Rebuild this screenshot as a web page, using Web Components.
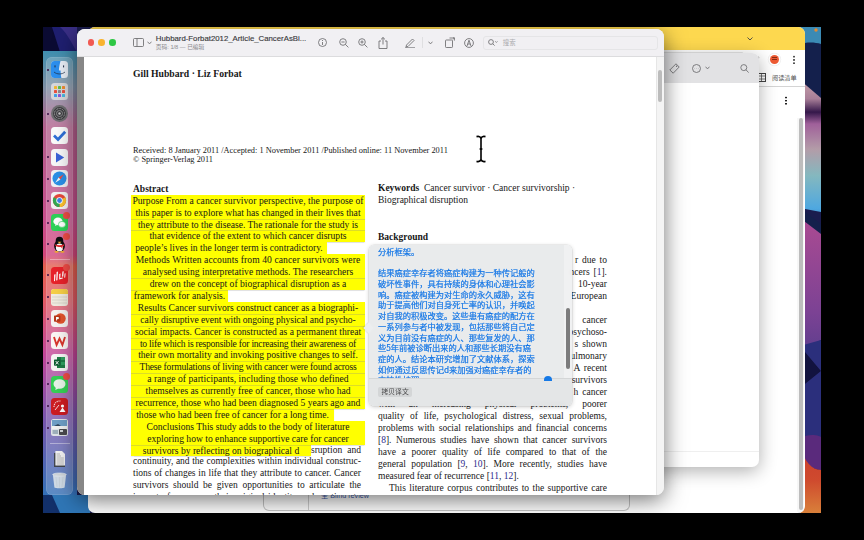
<!DOCTYPE html>
<html><head><meta charset="utf-8">
<style>
html,body{margin:0;padding:0;background:#000;width:864px;height:540px;overflow:hidden}
body{padding:27px 43px;box-sizing:border-box;font-family:"Liberation Serif",serif}
.ln{color:#2b2b8c}
b{font-weight:700}
svg{display:block}
</style></head><body>
<x-desktop>
  <x-dock slot="dock">
    <x-dock-item dot><svg viewBox="0 0 17 17"><rect width="17" height="17" rx="3.5" fill="#e8eef6"/><path d="M3.5 0H9.5C8.6 3.5 8 6.5 7.9 9.4H9.6C9.6 11.5 9.8 14 10.4 17H3.5A3.5 3.5 0 0 1 0 13.5V3.5A3.5 3.5 0 0 1 3.5 0Z" fill="#2c8fee"/><path d="M4 4.4V6.4M12.6 4.4V6.4" stroke="#1b2a44" stroke-width="1"/><path d="M3 11C6 13.6 11 13.6 14 11" stroke="#1b2a44" stroke-width=".7" fill="none"/></svg></x-dock-item>
    <x-dock-item><svg viewBox="0 0 17 17"><rect width="17" height="17" rx="3.5" fill="#d8d8dc"/><g><rect x="3" y="3" width="3" height="3" rx=".6" fill="#f2b632"/><rect x="7" y="3" width="3" height="3" rx=".6" fill="#5fbf4f"/><rect x="11" y="3" width="3" height="3" rx=".6" fill="#ef8a2f"/><rect x="3" y="7" width="3" height="3" rx=".6" fill="#e8503f"/><rect x="7" y="7" width="3" height="3" rx=".6" fill="#8a8a90"/><rect x="11" y="7" width="3" height="3" rx=".6" fill="#e8503f"/><rect x="3" y="11" width="3" height="3" rx=".6" fill="#3fa0e8"/><rect x="7" y="11" width="3" height="3" rx=".6" fill="#8d56d8"/><rect x="11" y="11" width="3" height="3" rx=".6" fill="#48b6e0"/></g></svg></x-dock-item>
    <x-dock-item dot><svg viewBox="0 0 17 17"><rect width="17" height="17" rx="8.5" fill="#6f6f72"/><circle cx="8.5" cy="8.5" r="6.4" fill="#3d3d40"/><circle cx="8.5" cy="8.5" r="5" fill="none" stroke="#a9a9ac" stroke-width="1" stroke-dasharray="1 .7"/><circle cx="8.5" cy="8.5" r="3" fill="none" stroke="#8a8a8d" stroke-width="1"/><circle cx="8.5" cy="8.5" r="1.2" fill="#c4c4c6"/></svg></x-dock-item>
    <x-dock-item><svg viewBox="0 0 17 17"><rect width="17" height="17" rx="3.5" fill="#fbfbfb"/><path d="M3 8.6L7 12.4L14.2 4.8" fill="none" stroke="#2e6fd6" stroke-width="2.8"/></svg></x-dock-item>
    <x-dock-item dot><svg viewBox="0 0 17 17"><rect width="17" height="17" rx="3.5" fill="#f7f7f8"/><path d="M5 3.6L13.2 8.6L5 13.6Z" fill="#3a63d8"/></svg></x-dock-item>
    <x-dock-item dot><svg viewBox="0 0 17 17"><rect width="17" height="17" rx="3.5" fill="#f1f1f3"/><circle cx="8.5" cy="8.5" r="7" fill="#2a8fe6"/><path d="M12.8 4.2L7.6 7.6L9.4 9.4Z" fill="#ef4a3c"/><path d="M4.2 12.8L7.6 7.6L9.4 9.4Z" fill="#f4f4f6"/></svg></x-dock-item>
    <x-dock-item dot><svg viewBox="0 0 17 17"><rect width="17" height="17" rx="3.5" fill="#f3f3f3"/><circle cx="8.5" cy="8.5" r="6.6" fill="#e7483a"/><path d="M8.5 8.5L14.2 5.2A6.6 6.6 0 0 1 8.5 15.1Z" fill="#f9c22e"/><path d="M8.5 8.5L8.5 15.1A6.6 6.6 0 0 1 2.8 5.2Z" fill="#32a852"/><circle cx="8.5" cy="8.5" r="3.2" fill="#fff"/><circle cx="8.5" cy="8.5" r="2.4" fill="#3f82ec"/></svg></x-dock-item>
    <x-dock-item dot badge><svg viewBox="0 0 17 17"><rect width="17" height="17" rx="3.5" fill="#2ed158"/><ellipse cx="7" cy="7.4" rx="4.6" ry="3.8" fill="#fff"/><path d="M4.6 10L4 12L6.4 10.8Z" fill="#fff"/><ellipse cx="11" cy="10.4" rx="3.6" ry="3" fill="#fff" stroke="#2ed158" stroke-width=".6"/></svg></x-dock-item>
    <x-dock-item dot badge><svg viewBox="0 0 17 17"><ellipse cx="8.5" cy="10" rx="5.4" ry="6" fill="#0e0e10"/><ellipse cx="8.5" cy="5" rx="3.8" ry="4.2" fill="#0e0e10"/><ellipse cx="8.5" cy="11.6" rx="3.6" ry="4" fill="#fff"/><path d="M6.6 5.8H10.4L8.5 7.4Z" fill="#f4b02e"/><path d="M4 8.2C6.5 9.6 10.5 9.6 13 8.2L13 10C12 10.6 11.6 10.6 11.4 10.6L11.6 13L10 11C8.5 11.2 6.5 11 4.4 10Z" fill="#e3262a"/><ellipse cx="5.6" cy="15.8" rx="2.2" ry=".9" fill="#f4b02e"/><ellipse cx="11.4" cy="15.8" rx="2.2" ry=".9" fill="#f4b02e"/></svg></x-dock-item>
    <x-dock-sep></x-dock-sep>
    <x-dock-item dot badge><svg viewBox="0 0 17 17"><rect width="17" height="17" rx="3.5" fill="#e8222a"/><g fill="#fff"><path d="M3.2 7.6L4.6 7.2L4 14L3 14.2Z"/><path d="M5.6 5L7 4.6L6.4 13.2L5.2 13.6Z"/><path d="M8.2 7L9.6 6.6L9.2 11L12 10.4L11.8 11.6L8.2 12.4Z"/><path d="M11.4 4.6L12.8 4.2L12.2 9.4L11 9.7Z"/><path d="M13.6 6.4L14.6 6.2L14.2 10.6L13.2 10.8Z"/></g></svg></x-dock-item>
    <x-dock-item dot><svg viewBox="0 0 17 17"><rect width="17" height="17" rx="3" fill="#f0ece0"/><path d="M0 5V3A3 3 0 0 1 3 0H14A3 3 0 0 1 17 3V5Z" fill="#f6cf45"/><path d="M1 8H16M1 11H16M1 14H16" stroke="#cfcabc" stroke-width=".6"/></svg></x-dock-item>
    <x-dock-item dot><svg viewBox="0 0 17 17"><rect width="17" height="17" rx="3.5" fill="#f6f3f1"/><circle cx="9.5" cy="8.5" r="5.2" fill="#e2542c"/><rect x="3" y="5.4" width="6.4" height="6.4" rx=".7" fill="#b7391a"/><path d="M5 7H6.9A1.1 1.1 0 0 1 6.9 9.2H5.9V10.4H5Z" fill="#fff"/></svg></x-dock-item>
    <x-dock-item dot><svg viewBox="0 0 17 17"><rect width="17" height="17" rx="3.5" fill="#fbf7f5"/><path d="M3 5L5.6 13L8.5 6.6L11.4 13L14 5" fill="none" stroke="#d8362c" stroke-width="1.9"/></svg></x-dock-item>
    <x-dock-item dot><svg viewBox="0 0 17 17"><rect width="17" height="17" rx="3.5" fill="#f6f6f4"/><path d="M6 3H14V14H6Z" fill="#1e7b46"/><path d="M10 3H14V6H10ZM10 8H14V11H10Z" fill="#2f9d5f"/><rect x="3" y="5.4" width="6.4" height="6.4" rx=".7" fill="#0f5e33"/><path d="M4.6 7L7.6 10.4M7.6 7L4.6 10.4" stroke="#fff" stroke-width=".9"/></svg></x-dock-item>
    <x-dock-item dot badge><svg viewBox="0 0 17 17"><rect width="17" height="17" rx="3.5" fill="#36cf55"/><ellipse cx="8.5" cy="8" rx="6" ry="4.8" fill="#e8f4e8"/><path d="M5 11.4L4.2 14L7.6 12.4Z" fill="#e8f4e8"/></svg></x-dock-item>
    <x-dock-item dot><svg viewBox="0 0 17 17"><rect width="17" height="17" rx="3.5" fill="#cc1c22"/><path d="M3 9C3 5 6 2.6 10 3" fill="none" stroke="#f7d7d7" stroke-width="1.1" stroke-dasharray="1.2 .8"/><circle cx="11.5" cy="8" r="1.6" fill="#fff"/><path d="M8.5 14L11.5 9.5L14.5 14Z" fill="#fff"/><path d="M4 12L8 7" stroke="#fff" stroke-width=".8"/></svg></x-dock-item>
    <x-dock-item dot><svg viewBox="0 0 17 17"><rect width="17" height="17" rx="2.5" fill="#e0e4e8"/><rect x="1" y="1" width="15" height="9" fill="#6f9fc6"/><path d="M1 7H16V10H1Z" fill="#f2f2f2"/><path d="M3 7L7 5L10 7Z" fill="#31465c"/><rect x="8" y="10" width="8" height="6" rx="1" fill="#4a4a4e"/><rect x="9" y="11" width="3" height="2" fill="#cfd4d8"/><rect x="1.5" y="11" width="5.5" height="4" fill="#9fb0bc"/></svg></x-dock-item>
    <x-dock-sep></x-dock-sep>
    <x-dock-item><svg viewBox="0 0 17 17"><path d="M3 3H12L14 5V17H3Z" fill="#41464e"/><path d="M4.4 1H11L14 4V15.6H4.4Z" fill="#f2f2f2"/><path d="M5.6 6H10M5.6 8H12.8M5.6 10H12.8M5.6 12H12.8M5.6 14H12.8M5.6 4H9" stroke="#8f8f8f" stroke-width=".6"/></svg></x-dock-item>
    <x-dock-item><svg viewBox="0 0 17 17"><ellipse cx="8.5" cy="2.6" rx="6.8" ry="1.6" fill="#cfd5da" stroke="#eef1f3" stroke-width=".6"/><path d="M1.9 3L3.4 15.6C3.6 16.6 13.4 16.6 13.6 15.6L15.1 3C12 4.4 5 4.4 1.9 3Z" fill="#dfe6ea" fill-opacity=".88"/><path d="M5 5L6 15M8.5 5V15.4M12 5L11 15" stroke="#b8c2c8" stroke-width=".35"/></svg></x-dock-item>
  </x-dock>

  <x-browser-window></x-browser-window>
  <x-notes-window></x-notes-window>
  <x-under-window></x-under-window>

  <x-pdf-window>
    <x-pdf-toolbar slot="bar"></x-pdf-toolbar>
    <x-pdf-page>
      <x-author>Gill Hubbard · Liz Forbat</x-author>
      <x-dates>
        <div>Received: 8 January 2011 /Accepted: 1 November 2011 /Published online: 11 November 2011</div>
        <div>© Springer-Verlag 2011</div>
      </x-dates>
      <x-columns>
        <div slot="left">
          <x-head after="0">Abstract</x-head>
          <x-hl ls=".05">Purpose From a cancer survivor perspective, the purpose of</x-hl>
          <x-hl>this paper is to explore what has changed in their lives that</x-hl>
          <x-hl seam>they attribute to the disease. The rationale for the study is</x-hl>
          <x-hl seam>that evidence of the extent to which cancer disrupts</x-hl>
          <x-hl w="196">people’s lives in the longer term is contradictory.</x-hl>
          <x-hl ls=".08">Methods Written accounts from 40 cancer survivors were</x-hl>
          <x-hl>analysed using interpretative methods. The researchers</x-hl>
          <x-hl seam>drew on the concept of biographical disruption as a</x-hl>
          <x-hl w="97" seam>framework for analysis.</x-hl>
          <x-hl>Results Cancer survivors construct cancer as a biographi-</x-hl>
          <x-hl seam ls="-.07">cally disruptive event with ongoing physical and psycho-</x-hl>
          <x-hl seam>social impacts. Cancer is constructed as a permanent threat</x-hl>
          <x-hl seam ls="-.24">to life which is responsible for increasing their awareness of</x-hl>
          <x-hl seam ls="-.03">their own mortality and invoking positive changes to self.</x-hl>
          <x-hl seam ls="-.2">These formulations of living with cancer were found across</x-hl>
          <x-hl seam ls=".04">a range of participants, including those who defined</x-hl>
          <x-hl seam>themselves as currently free of cancer, those who had</x-hl>
          <x-hl seam>recurrence, those who had been diagnosed 5 years ago and</x-hl>
          <x-hl w="203" seam>those who had been free of cancer for a long time.</x-hl>
          <x-hl>Conclusions This study adds to the body of literature</x-hl>
          <x-hl>exploring how to enhance supportive care for cancer</x-hl>
          <x-split>
            <x-hl slot="mark" w="180" seam>survivors by reflecting on biographical d</x-hl>
            <span slot="rest">sruption and</span>
          </x-split>
          <x-jline>continuity, and the complexities within individual construc-</x-jline>
          <x-jline>tions of changes in life that they attribute to cancer. Cancer</x-jline>
          <x-jline>survivors should be given opportunities to articulate the</x-jline>
          <x-jline>impact of cancer on their original identity and continue to</x-jline>
        </div>
        <div slot="right" style="--p:11.97px">
          <x-para>
            <x-jline last><b>Keywords</b>&nbsp; Cancer survivor · Cancer survivorship ·</x-jline>
            <x-jline last>Biographical disruption</x-jline>
          </x-para>
          <x-head gap="24.5" after="12">Background</x-head>
          <x-para after="12">
            <x-jline frag>r due to</x-jline>
            <x-jline frag>ncers [<span class="ln">1</span>].</x-jline>
            <x-jline frag>10-year</x-jline>
            <x-jline frag>European</x-jline>
          </x-para>
          <x-para>
            <x-jline frag>cancer</x-jline>
            <x-jline frag>psychoso-</x-jline>
            <x-jline frag>s shown</x-jline>
            <x-jline frag>ulmonary</x-jline>
            <x-jline frag>A recent</x-jline>
            <x-jline frag>survivors</x-jline>
            <x-jline frag>h cancer</x-jline>
            <x-jline>with an increasing physical problems, poorer</x-jline>
            <x-jline>quality of life, psychological distress, sexual problems,</x-jline>
            <x-jline>problems with social relationships and financial concerns</x-jline>
            <x-jline>[<span class="ln">8</span>]. Numerous studies have shown that cancer survivors</x-jline>
            <x-jline>have a poorer quality of life compared to that of the</x-jline>
            <x-jline>general population [<span class="ln">9</span>, <span class="ln">10</span>]. More recently, studies have</x-jline>
            <x-jline last>measured fear of recurrence [<span class="ln">11</span>, <span class="ln">12</span>].</x-jline>
            <x-jline indent>This literature corpus contributes to the supportive care</x-jline>
          </x-para>
        </div>
      </x-columns>
    </x-pdf-page>
  </x-pdf-window>

  <x-translate-pop>
    <div>分析框架。</div>
    <div>&nbsp;</div>
    <div>结果癌症幸存者将癌症构建为一种传记般的</div>
    <div>破坏性事件，具有持续的身体和心理社会影</div>
    <div>响。癌症被构建为对生命的永久威胁，这有</div>
    <div>助于提高他们对自身死亡率的认识，并唤起</div>
    <div>对自我的积极改变。这些患有癌症的配方在</div>
    <div>一系列参与者中被发现，包括那些将自己定</div>
    <div>义为目前没有癌症的人、那些复发的人、那</div>
    <div>些5年前被诊断出来的人和那些长期没有癌</div>
    <div>症的人。结论本研究增加了文献体系，探索</div>
    <div>如何通过反思传记d来加强对癌症幸存者的</div>
    <div>支持性护理。</div>
  </x-translate-pop>
  <x-ibeam></x-ibeam>
</x-desktop>

<script>
function def(name, css, html, init){
  const t=document.createElement('template');
  t.innerHTML='<style>'+css+'</style>'+html;
  customElements.define(name,class extends HTMLElement{
    constructor(){super();this.attachShadow({mode:'open'}).appendChild(t.content.cloneNode(true));}
    connectedCallback(){ if(init) init(this); }
  });
}
const ICON='fill="none" stroke="#6b6b6e" stroke-width=".85"';

def('x-desktop',`
:host{display:block;position:relative;width:778px;height:486px;overflow:hidden}
svg{position:absolute;left:0;top:0;display:block}
`,`<svg width="778" height="486" viewBox="43 27 778 486">
<defs>
<linearGradient id="l" x1="0" y1="0" x2="0" y2="1">
<stop offset="0" stop-color="#3f8fb0"/><stop offset=".08" stop-color="#7c8fa4"/><stop offset=".17" stop-color="#b3608d"/><stop offset=".38" stop-color="#c84e8c"/><stop offset=".455" stop-color="#d2467c"/><stop offset=".48" stop-color="#e5604e"/><stop offset=".56" stop-color="#e25a66"/><stop offset=".68" stop-color="#c2469a"/><stop offset=".82" stop-color="#7a55ad"/><stop offset="1" stop-color="#2f72b8"/>
</linearGradient>
<linearGradient id="r" x1="0" y1="84" x2="0" y2="232" gradientUnits="userSpaceOnUse">
<stop offset="0" stop-color="#c09aa6"/><stop offset=".1" stop-color="#a87f98"/><stop offset=".19" stop-color="#34174a"/><stop offset=".27" stop-color="#a0609a"/><stop offset=".44" stop-color="#b39ca8"/><stop offset=".62" stop-color="#84b8bf"/><stop offset=".84" stop-color="#4fa8e0"/><stop offset="1" stop-color="#2a5fa0"/>
</linearGradient>
<linearGradient id="m" x1="0" y1="224" x2="0" y2="400" gradientUnits="userSpaceOnUse">
<stop offset="0" stop-color="#a84a92"/><stop offset=".5" stop-color="#7c4294"/><stop offset="1" stop-color="#3c3a86"/>
</linearGradient>
<linearGradient id="o" x1="0" y1="440" x2="0" y2="513" gradientUnits="userSpaceOnUse">
<stop offset="0" stop-color="#c83a2c"/><stop offset=".55" stop-color="#cf4a2e"/><stop offset="1" stop-color="#d9803a"/>
</linearGradient>
</defs>
<rect x="43" y="27" width="778" height="486" fill="#1a1c4e"/>
<path d="M43 27H77V52H43Z" fill="#1f1f70"/><path d="M43 27H52L60 52H43Z" fill="#0b0b33"/><path d="M60 27C68 34 72 44 77 52V27Z" fill="#3a2f86"/>
<rect x="43" y="51" width="34" height="448" fill="url(#l)"/>
<path d="M43 495H90V513H52L43 505Z" fill="#2f76b6"/><path d="M43 495H52L60 513H43Z" fill="#12306a"/>
<rect x="800" y="27" width="21" height="20" fill="#3b8ab4"/>
<path d="M800 44C806 42 815 42 821 44V100L800 82Z" fill="#14204c"/>
<path d="M800 80L821 98V212L800 208Z" fill="url(#r)"/>
<path d="M800 208L821 224V236L800 220Z" fill="#14204c"/>
<path d="M800 218L821 234V340L800 352Z" fill="url(#m)"/>
<path d="M800 226C808 226 816 230 821 236V340H800Z" fill="url(#m)"/>
<path d="M800 346L821 371L800 388Z" fill="#12133f"/>
<path d="M821 371V340L800 346ZM821 371V437H800V388Z" fill="#2b2f7c"/>
<path d="M800 437H821V450Z" fill="#2b2f7c"/>
<path d="M800 438C812 432 821 437 821 437V470C812 470 800 462 800 438Z" fill="#5a2a7c"/>
<path d="M800 444C804 462 812 470 821 470V513H800Z" fill="url(#o)"/>
<circle cx="816" cy="30" r="1.7" fill="#e48b32"/>
</svg><slot name="dock"></slot><slot></slot>`);

def('x-dock',`
:host{position:absolute;left:3px;top:30px;width:27px;height:438px;box-sizing:border-box;padding-top:2.1px;
  display:flex;flex-direction:column;border-radius:6px;background:rgba(255,255,255,.2);box-shadow:inset 0 0 0 .5px rgba(255,255,255,.22)}
`,`<slot></slot>`);

def('x-dock-item',`
:host{display:flex;align-items:center;justify-content:center;height:21.8px;position:relative;flex:none}
.box{width:17px;height:17px;position:relative}
::slotted(svg){display:block;width:17px;height:17px}
.dot{position:absolute;left:1px;top:50%;margin-top:-1px;width:2px;height:2px;border-radius:50%;background:#3a0f45;display:none}
:host([dot]) .dot{display:block}
.bdg{position:absolute;right:-2px;top:-2.5px;width:7px;height:7px;border-radius:50%;background:#ee4b46;display:none}
:host([badge]) .bdg{display:block}
`,`<span class="dot"></span><div class="box"><slot></slot><span class="bdg"></span></div>`);

def('x-dock-sep',`:host{display:block;height:.6px;margin:4.2px 3.5px 4.4px;background:rgba(255,255,255,.4);flex:none}`,``);

def('x-browser-window',`
:host{position:absolute;left:45px;top:0;width:717px;height:486px;background:#fff;border-radius:7px;display:flex;flex-direction:column;overflow:hidden}
.tabs{height:23px;background:#fdd84f;display:flex;align-items:center;flex:none}
.plus{margin-left:531px;color:#555}
.chev{margin-left:121px}
.row{height:18px;display:flex;align-items:center;justify-content:flex-end;flex:none}
.top{padding-right:10px}
.pz{margin-right:10px}
.avatar{width:9px;height:9px;border-radius:50%;background:#ee5a33;box-shadow:0 0 0 1.5px #fff,0 0 0 2.2px #eee;margin-right:14px;position:relative;display:flex;align-items:center;justify-content:center}
.avatar::after{content:"";width:5px;height:1px;background:#8a2c14;box-shadow:0 -2px 0 #8a2c14}
.keb{width:2px;height:9px;background:radial-gradient(circle,#555 .8px,transparent 1px) 0 0/2px 3.3px repeat-y}
.marks{height:18px;display:flex;align-items:center;padding-left:670px;gap:6px;border-bottom:1px solid #d4d4d4;box-sizing:content-box;flex:none;font:6.2px "Noto Sans CJK SC","Liberation Sans",sans-serif;color:#555}
.body{flex:1;position:relative;display:flex;justify-content:flex-end;padding-right:1px}
.kb{position:absolute;left:697px;top:9px;width:2px;height:9px;background:radial-gradient(circle,#222 .95px,transparent 1.05px) 0 0/2px 3.1px repeat-y}
.gut{margin-top:31px;width:7px;padding:0 1px 3px;box-sizing:border-box;background:#f7f7f7;border-radius:0 0 3px 3px;display:flex;justify-content:center}
.thumb{width:4px;background:#bdbdbd;border-radius:2px;height:100%}
`,`<div class="tabs">
  <svg class="plus" width="7" height="7" viewBox="0 0 7 7"><path d="M3.5 0V7M0 3.5H7" stroke="#555" stroke-width=".8"/></svg>
  <svg class="chev" width="6" height="4" viewBox="0 0 6 4"><path d="M.5 .5L3 3L5.5 .5" fill="none" stroke="#444" stroke-width=".9"/></svg>
</div>
<div class="row top"><svg class="pz" width="6" height="9" viewBox="0 0 6 9"><path d="M0 0H3V2A1.2 1.2 0 0 1 5 3.6L5 6H3V9H0Z" fill="#8e8e90"/></svg><span class="avatar"></span><span class="keb"></span></div>
<div class="marks">
  <svg width="8" height="9" viewBox="0 0 8 9"><rect x=".5" y=".5" width="7" height="8" fill="none" stroke="#444"/><path d="M1 3H7M1 6H7M3.5 1V8" stroke="#444" stroke-width=".7"/></svg>
  <span>阅读清单</span>
</div>
<div class="body"><span class="kb"></span><div class="gut"><div class="thumb"></div></div></div>`);

def('x-notes-window',`
:host{position:absolute;left:597px;top:26px;width:119px;height:414px;background:#fff;border-radius:0 7px 7px 7px;display:flex;flex-direction:column;box-shadow:0 4px 18px rgba(0,0,0,.32)}
:host::before{content:"";position:absolute;left:0;right:16px;top:-1.5px;height:1.5px;background:#cfcfcf;border-radius:2px 2px 0 0}
.bar{height:30px;background:#e2e2e4;border-radius:0 7px 0 0;display:flex;align-items:center;flex:none;padding-left:29px;position:relative}
.foot{margin-top:auto;height:15px;border-top:1px solid #efefef}
`,`<div class="bar">
<svg width="11" height="11" viewBox="0 0 11 11"><path d="M7 .8L10.2 4L4.2 10.2L.8 7Z" ${ICON} stroke-linejoin="round"/><circle cx="7.6" cy="3.3" r=".7" fill="#6b6b6e"/></svg>
<svg style="margin-left:12px" width="9" height="9" viewBox="0 0 9 9"><circle cx="4.5" cy="4.5" r="4" ${ICON}/><path d="M2.7 4.5H2.9M4.4 4.5H4.6M6.1 4.5H6.3" stroke="#6b6b6e"/></svg>
<svg style="margin-left:4px" width="5" height="4" viewBox="0 0 5 4"><path d="M.5 .7L2.5 2.9L4.5 .7" ${ICON}/></svg>
<svg style="margin-left:30px" width="9" height="9" viewBox="0 0 9 9"><circle cx="3.8" cy="3.6" r="3" ${ICON}/><path d="M6 5.8L8.6 8.6" ${ICON}/></svg>
</div><div class="foot"></div>`);

def('x-under-window',`
:host{position:absolute;left:220px;top:440px;width:367px;height:44px;box-sizing:border-box;background:rgba(255,255,255,.55);border:1px solid #c4c4c4;border-top:0;border-radius:0 0 6px 6px;display:flex}
.a{width:44px;border-right:1px solid #cfcfcf;flex:none}
.t{padding:22.5px 0 0 12px;font:7.2px "Liberation Sans","Noto Sans CJK SC",sans-serif;color:#3a5aa8;white-space:nowrap;overflow:hidden}
`,`<div class="a"></div><div class="t">全 Blind review</div>`);

def('x-pdf-window',`
:host{position:absolute;left:34px;top:2px;width:587px;height:466px;border-radius:8px;display:flex;flex-direction:column;box-shadow:0 5px 22px rgba(0,0,0,.55);background:#f4f4f4}
.main{flex:1;display:flex;min-height:0;border-radius:0 0 8px 8px;overflow:hidden}
.lft{width:7px;background:#878787;flex:none}
.pg{width:572px;background:#fff;overflow:hidden;flex:none}
.gut{flex:1;background:#f4f4f4;border-left:1px solid #e6e6e6;position:relative}
.thumb{position:absolute;left:1px;top:13px;width:4px;height:32px;background:#bcbcbc;border-radius:2px}
`,`<slot name="bar"></slot><div class="main"><div class="lft"></div><div class="pg"><slot></slot></div><div class="gut"><div class="thumb"></div></div></div>`);

def('x-pdf-toolbar',`
:host{display:flex;align-items:center;height:28px;box-sizing:border-box;background:#f1f0f3;border-bottom:1px solid #dcdcde;border-radius:8px 8px 0 0;padding-left:10.5px;flex:none;position:relative}
.tl{width:6.6px;height:6.6px;border-radius:50%;margin-right:4.2px;flex:none}
.ttl{margin-left:4px;width:162px;flex:none;font-family:"Liberation Sans","Noto Sans CJK SC",sans-serif;line-height:1}
.t1{font-size:7.8px;color:#3b3b3e;white-space:nowrap;-webkit-text-stroke:.15px #3b3b3e}
.t2{font-size:5.7px;color:#8a8a8d;margin-top:2px;white-space:nowrap}
svg{flex:none;display:block}
.sep{width:1px;height:11px;background:#dfdfe1;flex:none}
.search{margin-left:9px;width:175px;height:14px;box-sizing:border-box;border:1px solid #e5e5e7;border-radius:3px;display:flex;align-items:center;padding-left:4px;font:6.4px "Noto Sans CJK SC",sans-serif;color:#ababae;gap:3px;flex:none}
`,`
<span class="tl" style="background:#f15a52"></span><span class="tl" style="background:#f9b32f"></span><span class="tl" style="background:#2ec744"></span>
<svg style="margin-left:13px" width="11" height="9" viewBox="0 0 11 9"><rect x=".5" y=".5" width="10" height="8" rx="1" ${ICON}/><path d="M4 .5V8.5" ${ICON}/></svg>
<svg style="margin-left:3px" width="5" height="4" viewBox="0 0 5 4"><path d="M.5 .7L2.5 2.9L4.5 .7" ${ICON}/></svg>
<div class="ttl"><div class="t1">Hubbard-Forbat2012_Article_CancerAsBi...</div><div class="t2">页码: 1/8 — 已编辑</div></div>
<svg width="9" height="9" viewBox="0 0 9 9"><circle cx="4.5" cy="4.5" r="4" ${ICON}/><path d="M4.5 4V7" ${ICON}/><circle cx="4.5" cy="2.5" r=".55" fill="#6b6b6e"/></svg>
<svg style="margin-left:12px" width="10" height="10" viewBox="0 0 10 10"><circle cx="4" cy="4" r="3.3" ${ICON}/><path d="M6.4 6.4L9.4 9.4" ${ICON}/><path d="M2.4 4H5.6" ${ICON}/></svg>
<svg style="margin-left:9px" width="10" height="10" viewBox="0 0 10 10"><circle cx="4" cy="4" r="3.3" ${ICON}/><path d="M6.4 6.4L9.4 9.4" ${ICON}/><path d="M2.4 4H5.6M4 2.4V5.6" ${ICON}/></svg>
<svg style="margin-left:10px" width="10" height="12" viewBox="0 0 10 12"><path d="M3 4H1V11.5H9V4H7" ${ICON}/><path d="M5 .5V7.5M3 2.4L5 .5L7 2.4" ${ICON}/></svg>
<svg style="margin-left:17px" width="10" height="10" viewBox="0 0 10 10"><path d="M1.5 7L7.5 1L9 2.5L3 8.5L1 9Z" ${ICON}/><path d="M0 9.8H10" ${ICON}/></svg>
<span class="sep" style="margin-left:7px"></span>
<svg style="margin-left:5px" width="5" height="4" viewBox="0 0 5 4"><path d="M.5 .7L2.5 2.9L4.5 .7" ${ICON}/></svg>
<svg style="margin-left:12px" width="11" height="11" viewBox="0 0 11 11"><rect x=".5" y="3" width="7" height="7.5" rx=".8" ${ICON}/><path d="M4.5 1H9.4V3.6M8 2.4L9.4 1L8 -.4" ${ICON}/></svg>
<svg style="margin-left:8px" width="10" height="10" viewBox="0 0 10 10"><circle cx="5" cy="5" r="4.4" ${ICON}/><path d="M3 8L5 2.2L7 8M3.8 6H6.2" ${ICON}/></svg>
<div class="search"><svg width="10" height="7" viewBox="0 0 10 7"><circle cx="3" cy="3" r="2.4" ${ICON}/><path d="M4.8 4.8L6.6 6.6" ${ICON}/><path d="M7.4 2.4L8.4 3.4L9.4 2.4" ${ICON}/></svg><span style="margin-left:2px">搜索</span></div>`);

def('x-pdf-page',`
:host{display:block;box-sizing:border-box;padding:11px 0 0 49px;font:9.5px/11.9px "Liberation Serif",serif;color:#171717;height:438px;overflow:hidden}
`,`<slot></slot>`);

def('x-author',`:host{display:block;font-weight:700;font-size:9.7px;line-height:12px;white-space:nowrap}`,`<slot></slot>`);
def('x-dates',`:host{display:block;margin-top:65.5px;font-size:8.35px;line-height:9.4px;white-space:nowrap}`,`<slot></slot>`);
def('x-columns',`
:host{display:grid;grid-template-columns:228px 229px;column-gap:17px;margin-top:18.5px}
`,`<slot name="left"></slot><slot name="right"></slot>`);

def('x-head',`:host{display:block;font-weight:700;line-height:12px;margin-top:var(--g,0);margin-bottom:var(--a,1px)}`,`<slot></slot>`,
 el=>{ if(el.hasAttribute('gap')) el.style.setProperty('--g',el.getAttribute('gap')+'px'); if(el.hasAttribute('after')) el.style.setProperty('--a',el.getAttribute('after')+'px'); });

def('x-para',`:host{display:block;margin-bottom:var(--a,0)}`,`<slot></slot>`,
 el=>{ if(el.hasAttribute('after')) el.style.setProperty('--a',el.getAttribute('after')+'px'); });

def('x-jline',`
:host{display:block;height:var(--p,11.9px);line-height:var(--p,11.9px);text-align:justify;text-align-last:justify}
:host([last]){text-align-last:left}
:host([frag]){text-align:right;text-align-last:right;word-spacing:1.5px}
:host([indent]){padding-left:11px}
`,`<slot></slot>`);

def('x-hl',`
:host{display:block;box-sizing:border-box;margin-left:-2px;width:var(--w,234px);height:11.9px;line-height:11.9px;font-size:9.6px;letter-spacing:var(--ls,0);background:#ffff00;text-align:center;white-space:nowrap;position:relative;box-shadow:0 .5px 1px rgba(110,110,110,.2)}
:host([seam])::before{content:"";position:absolute;left:0;right:0;top:0;height:1px;background:rgba(150,150,120,.32)}
`,`<slot></slot>`,
 el=>{ if(el.hasAttribute('w')) el.style.setProperty('--w',el.getAttribute('w')+'px'); if(el.hasAttribute('ls')) el.style.setProperty('--ls',el.getAttribute('ls')+'px'); });

def('x-split',`
:host{display:flex;height:11.9px;width:228px;align-items:flex-start}
.r{flex:1;min-width:0;text-align:justify;text-align-last:justify}
`,`<slot name="mark"></slot><div class="r"><slot name="rest"></slot></div>`);

def('x-translate-pop',`
:host{position:absolute;left:326px;top:218px;width:203px;height:161px;border-radius:5px;display:flex;flex-direction:column;background:rgba(231,234,235,.93);backdrop-filter:blur(1.5px);-webkit-backdrop-filter:blur(1.5px);box-shadow:0 1px 4px rgba(0,0,0,.2),0 0 0 .5px rgba(0,0,0,.09)}
.tail{position:absolute;left:-4px;top:79px;width:8px;height:8px;background:#eceeef;transform:rotate(45deg);box-shadow:-1px 1px 1px rgba(0,0,0,.09)}
.scroll{height:133px;flex:none;overflow:hidden;position:relative;box-sizing:border-box;padding:.8px 0 0 9px;border-radius:5px 5px 0 0;
 font:8.25px/10.72px "Noto Sans CJK SC","Liberation Sans",sans-serif;color:#1275e6;white-space:nowrap;-webkit-text-stroke:.2px #1275e6}
.track{position:absolute;right:0;top:0;bottom:0;width:8px;background:rgba(255,255,255,.3)}
.thumb{position:absolute;right:2px;top:63px;width:4px;height:61px;border-radius:2px;background:#7c7c7d}
.cir{position:absolute;left:175px;top:131px;width:8px;height:8px;border-radius:50%;background:#1679e6;z-index:2;clip-path:inset(0 0 3px 0)}
.foot{flex:1;border-top:1px solid rgba(0,0,0,.07);background:rgba(224,226,227,.55);border-radius:0 0 5px 5px;padding:8px 0 0 9px;position:relative}
.btn{display:inline-block;height:9.5px;line-height:9.5px;padding:0 3.5px;background:#d4d6d7;border-radius:2px;font:6.8px/9.5px "Noto Sans CJK SC",sans-serif;color:#4a4a4c;vertical-align:top}
`,`<span class="tail"></span><div class="scroll"><slot></slot><span class="track"></span><span class="thumb"></span></div><span class="cir"></span><div class="foot"><span class="btn">拷贝译文</span></div>`);

def('x-ibeam',`:host{position:absolute;left:433px;top:108px;width:10px;height:28px}`,
`<svg width="10" height="28" viewBox="0 0 10 28"><path d="M.5 1.6C3 1 4.4 1.6 5 3.4C5.6 1.6 7 1 9.5 1.6M.5 26.4C3 27 4.4 26.4 5 24.6C5.6 26.4 7 27 9.5 26.4M5 3.4V24.6M3.6 14H6.4" fill="none" stroke="#fff" stroke-width="2.8"/><path d="M.5 1.6C3 1 4.4 1.6 5 3.4C5.6 1.6 7 1 9.5 1.6M.5 26.4C3 27 4.4 26.4 5 24.6C5.6 26.4 7 27 9.5 26.4M5 3.4V24.6M3.6 14H6.4" fill="none" stroke="#000" stroke-width="1.6"/></svg>`);
</script>
</body></html>
